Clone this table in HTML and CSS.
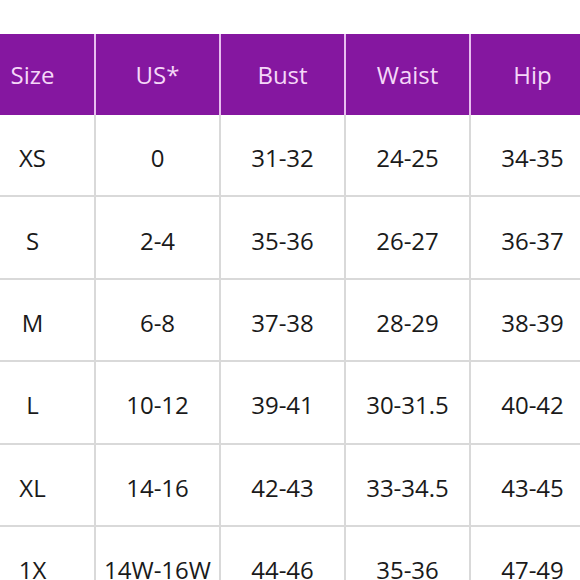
FILE: index.html
```html
<!DOCTYPE html>
<html>
<head>
<meta charset="utf-8">
<link rel="stylesheet" href="styles.css">
</head>
<body>
<div class="page">
  <div class="chart">
    <div class="row head">
      <div class="cell">Size</div>
      <div class="cell">US*</div>
      <div class="cell">Bust</div>
      <div class="cell">Waist</div>
      <div class="cell">Hip</div>
    </div>
    <div class="row">
      <div class="cell">XS</div><div class="cell">0</div><div class="cell">31-32</div><div class="cell">24-25</div><div class="cell">34-35</div>
    </div>
    <div class="row">
      <div class="cell">S</div><div class="cell">2-4</div><div class="cell">35-36</div><div class="cell">26-27</div><div class="cell">36-37</div>
    </div>
    <div class="row">
      <div class="cell">M</div><div class="cell">6-8</div><div class="cell">37-38</div><div class="cell">28-29</div><div class="cell">38-39</div>
    </div>
    <div class="row">
      <div class="cell">L</div><div class="cell">10-12</div><div class="cell">39-41</div><div class="cell">30-31.5</div><div class="cell">40-42</div>
    </div>
    <div class="row">
      <div class="cell">XL</div><div class="cell">14-16</div><div class="cell">42-43</div><div class="cell">33-34.5</div><div class="cell">43-45</div>
    </div>
    <div class="row">
      <div class="cell">1X</div><div class="cell">14W-16W</div><div class="cell">44-46</div><div class="cell">35-36</div><div class="cell">47-49</div>
    </div>
  </div>
</div>
</body>
</html>
```
FILE: styles.css
```css
html, body {
  margin: 0;
  padding: 0;
  background: #ffffff;
  overflow: hidden;
}
.page {
  width: 580px;
  height: 580px;
  overflow: hidden;
  padding-top: 34px;
  box-sizing: border-box;
}
.chart {
  margin-left: -29px;
  width: 630px;
  font-family: "Open Sans", "Noto Sans", sans-serif;
  font-size: 24px;
  color: #1a1a1a;
}
.row {
  display: grid;
  grid-template-columns: repeat(5, 125px);
  height: 82.4px;
}
.cell {
  display: flex;
  align-items: center;
  justify-content: center;
  padding-top: 5px;
  border-right: 2px solid #d9d9d9;
  border-bottom: 2px solid #d9d9d9;
  box-sizing: border-box;
}
.row.head {
  height: 81px;
  background: #8517a0;
  color: #f5d8f8;
}
.row.head .cell {
  padding-top: 0;
  border-bottom: none;
  border-right: 2px solid #e8bdf0;
}
```
